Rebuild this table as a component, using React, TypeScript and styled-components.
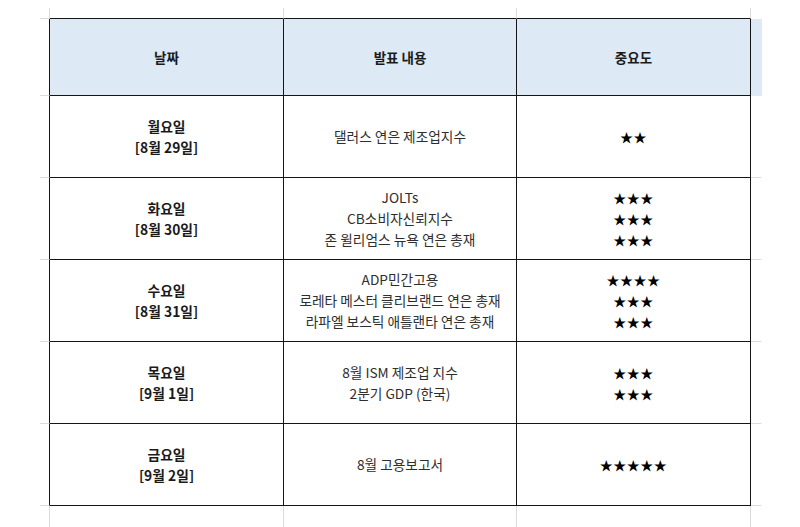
import React from 'react';
import styled, { createGlobalStyle } from 'styled-components';

const GlobalStyle = createGlobalStyle`
    html, body {
        margin: 0;
        padding: 0;
        background: #ffffff;
    }
    body {
        font-family: "Noto Sans CJK KR", "Noto Sans", sans-serif;
        color: #222;
    }
`;

const FAINT = '#dcdcdc';
const DARK = '#151515';

const Sheet = styled.div`
    display: grid;
    grid-template-columns: 10px 234px 233px 234px 11px;
    grid-template-rows: 11px 77px repeat(5, 82px) 30px;
    margin: 8px 0 0 40px;
    width: max-content;
`;

// 스프레드시트 셀: 오른쪽/아래 테두리만 그린다
const Cell = styled.div<{ $right?: string; $bottom?: string; $fill?: string }>`
    box-sizing: border-box;
    border-right: 1px solid ${p => p.$right || 'transparent'};
    border-bottom: 1px solid ${p => p.$bottom || 'transparent'};
    background: ${p => p.$fill || 'transparent'};
`;

const TableCell = styled(Cell)`
    display: flex;
    flex-direction: column;
    align-items: center;
    justify-content: center;
    text-align: center;
    font-size: 13px;
    line-height: 21px;
`;

const HeadText = styled.span`
    font-weight: 700;
    color: #1a1a1a;
    font-size: 13.5px;
`;

const DayText = styled.span`
    font-weight: 700;
    color: #1a1a1a;
    font-size: 13.8px;
`;

const Line = styled.span`
    color: #2e2e2e;
    font-size: 13.7px;
    white-space: nowrap;
`;

const Stars = styled.span`
    color: #000;
    font-size: 13px;
    letter-spacing: 0.5px;
    white-space: nowrap;
`;

type Row = { day: string; date: string; items: string[]; stars: number[] };

const rows: Row[] = [
    { day: '월요일', date: '[8월 29일]', items: ['댈러스 연은 제조업지수'], stars: [2] },
    { day: '화요일', date: '[8월 30일]', items: ['JOLTs', 'CB소비자신뢰지수', '존 윌리엄스 뉴욕 연은 총재'], stars: [3, 3, 3] },
    { day: '수요일', date: '[8월 31일]', items: ['ADP민간고용', '로레타 메스터 클리브랜드 연은 총재', '라파엘 보스틱 애틀랜타 연은 총재'], stars: [4, 3, 3] },
    { day: '목요일', date: '[9월 1일]', items: ['8월 ISM 제조업 지수', '2분기 GDP (한국)'], stars: [3, 3] },
    { day: '금요일', date: '[9월 2일]', items: ['8월 고용보고서'], stars: [5] },
];

function App() {
    return (
        <>
            <GlobalStyle />
            <Sheet>
                {/* 윗줄 */}
                <Cell $right={FAINT} $bottom={FAINT} />
                <Cell $right={FAINT} $bottom={DARK} />
                <Cell $right={FAINT} $bottom={DARK} />
                <Cell $right={FAINT} $bottom={DARK} />
                <Cell />

                {/* 머리글 */}
                <Cell $right={DARK} $bottom={FAINT} />
                <TableCell $right={DARK} $bottom={DARK} $fill="#dde9f5"><HeadText>날짜</HeadText></TableCell>
                <TableCell $right={DARK} $bottom={DARK} $fill="#dde9f5"><HeadText>발표 내용</HeadText></TableCell>
                <TableCell $right={DARK} $bottom={DARK} $fill="#dde9f5"><HeadText>중요도</HeadText></TableCell>
                <Cell $fill="#dde9f5" />

                {rows.map((row) => (
                    <React.Fragment key={row.day}>
                        <Cell $right={DARK} $bottom={FAINT} />
                        <TableCell $right={DARK} $bottom={DARK}>
                            <DayText>{row.day}</DayText>
                            <DayText>{row.date}</DayText>
                        </TableCell>
                        <TableCell $right={DARK} $bottom={DARK}>
                            {row.items.map(item => <Line key={item}>{item}</Line>)}
                        </TableCell>
                        <TableCell $right={DARK} $bottom={DARK}>
                            {row.stars.map((n, i) => <Stars key={i}>{'★'.repeat(n)}</Stars>)}
                        </TableCell>
                        <Cell $bottom={FAINT} />
                    </React.Fragment>
                ))}

                {/* 아랫줄 */}
                <Cell $right={FAINT} />
                <Cell $right={FAINT} />
                <Cell $right={FAINT} />
                <Cell $right={FAINT} />
                <Cell />
            </Sheet>
        </>
    );
}

export default App;
